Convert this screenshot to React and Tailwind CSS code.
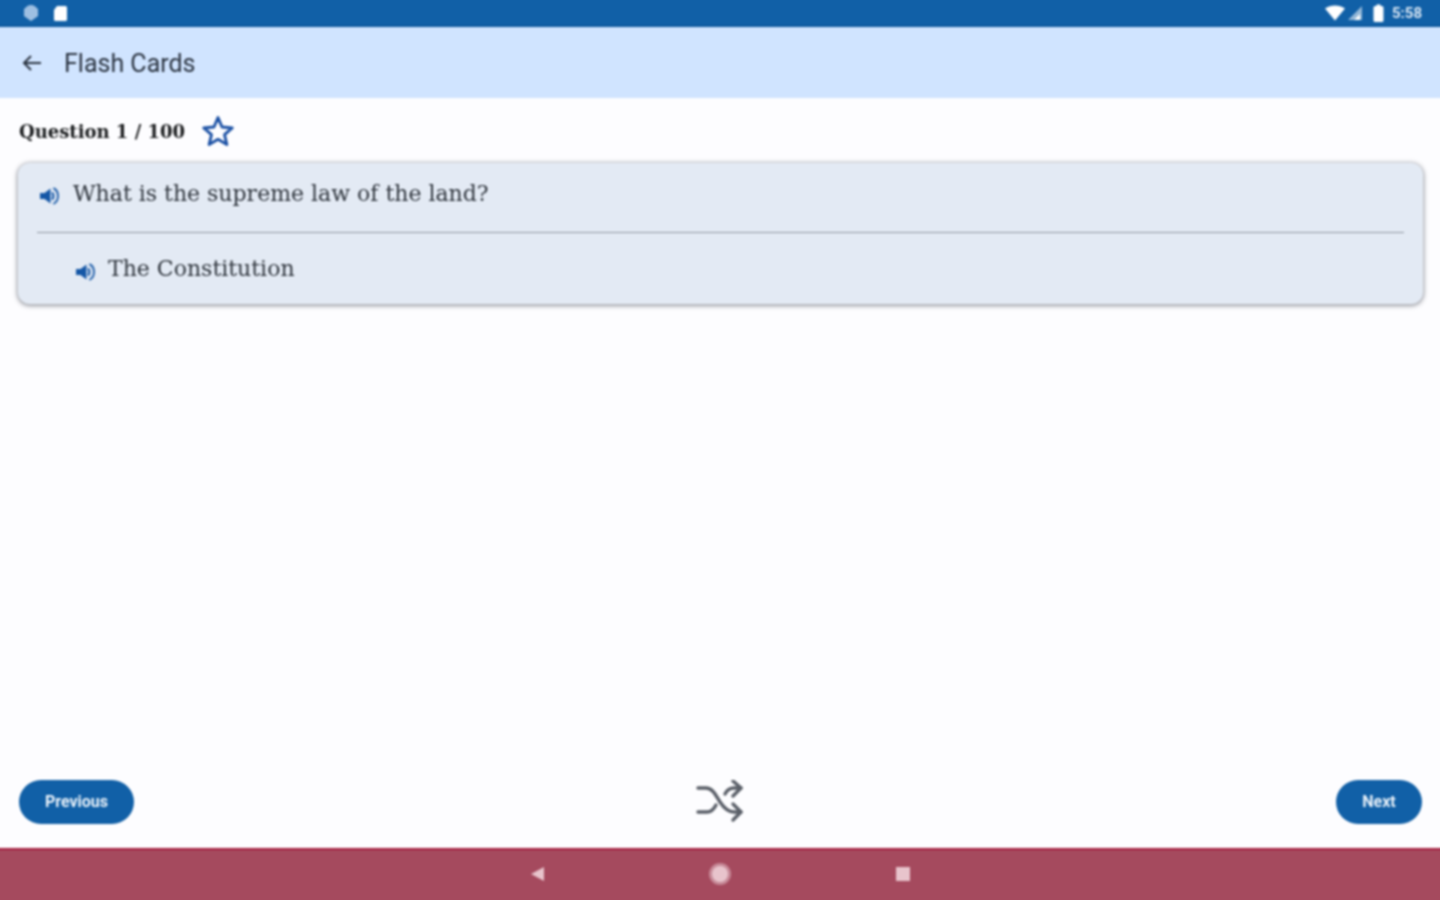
function Speaker({ className }) {
  return (
    <svg viewBox="0 0 22 22" className={className}>
      <path d="M1 8h4.500L11.500 3.500v15L5.500 14H1z" fill="#1557a6" />
      <path d="M13.500 8c1.200 2 1.200 4 0 6" fill="none" stroke="#1557a6" strokeWidth="2" strokeLinecap="round" />
      <path d="M15 3.500c4.800 2.500 5.800 11.500 0 15" fill="none" stroke="#2a66ad" strokeWidth="2" strokeLinecap="round" />
    </svg>
  );
}

export default function App() {
  return (
    <div className="h-[900px] w-[1440px] overflow-hidden">
      <div className="-ml-[4px] -mt-[4px] flex h-[908px] w-[1448px] flex-col bg-[#fdfdff] font-['Roboto',sans-serif] blur-[0.8px]">
        {/* status bar */}
        <div className="flex h-[31px] items-center justify-between border-b-2 border-[#0f5a9e] bg-[#1160a7] pl-[26px] pr-[22px] pt-[5px]">
          <div className="flex items-center gap-[12px]">
            <svg viewBox="0 0 18 18" className="h-[18px] w-[18px]">
              <path d="M9 1l7 4v7l-7 5-7-5V5z" fill="#a9c7e6" />
              <circle cx="9" cy="8" r="7" fill="#9dbfe2" />
            </svg>
            <svg viewBox="0 0 16 18" className="h-[18px] w-[16px]">
              <path d="M5 2h8.500a1.500 1.500 0 0 1 1.500 1.500v12a1.500 1.500 0 0 1-1.500 1.500h-10a1.500 1.500 0 0 1-1.500-1.500V6z" fill="#fff" />
            </svg>
          </div>
          <div className="flex items-center">
            <svg viewBox="0 0 20 16" className="h-[16px] w-[20px]">
              <path d="M0 3.500C5.500-.5 14.500-.5 20 3.500L10 15.500z" fill="#fff" />
            </svg>
            <svg viewBox="0 0 16 16" className="ml-[2px] h-[16px] w-[16px]">
              <path d="M1 15L15 1v14z" fill="#fff" fillOpacity="0.55" />
              <path d="M7 15l6-6v6z" fill="#fff" />
            </svg>
            <svg viewBox="0 0 10 18" className="ml-[10px] h-[18px] w-[11px]">
              <path d="M3 2V0.500h4V2h1.500A1.500 1.500 0 0 1 10 3.500V16.500A1.500 1.500 0 0 1 8.500 18h-7A1.500 1.500 0 0 1 0 16.500V3.500A1.500 1.500 0 0 1 1.500 2z" fill="#fff" />
            </svg>
            <span className="ml-[8px] text-[15px] font-bold leading-none text-[#dbe8f5]">5:58</span>
          </div>
        </div>

        {/* app bar */}
        <div className="flex h-[71px] items-center bg-[#d0e4ff] pl-[24px]">
          <svg viewBox="0 0 24 24" className="h-[24px] w-[24px]" fill="none" stroke="#2a3340" strokeWidth="2">
            <path d="M21 12H4M11 5l-7 7 7 7" />
          </svg>
          <span className="ml-[20px] pt-[2px] text-[25px] leading-none text-[#2a3340]">Flash Cards</span>
        </div>

        {/* main */}
        <div className="flex flex-1 flex-col px-[22px]">
          <div className="flex h-[65px] items-center pl-[1px] pt-[2px]">
            <span className="font-['DejaVu_Serif',serif] text-[18px] font-bold leading-none text-[#1a1c1e]">Question 1 / 100</span>
            <svg viewBox="0 0 34 34" className="-mt-[2px] ml-[16px] h-[34px] w-[34px]" fill="none" stroke="#1a50a4" strokeWidth="2.800" strokeLinejoin="round">
              <path d="M17 3.500l4 9.500 10.300.9-7.800 6.700 2.400 10-8.900-5.300-8.900 5.300 2.400-10-7.800-6.700L13 13z" />
            </svg>
          </div>

          <div className="flex h-[141px] w-[1405px] flex-col rounded-[12px] bg-[#e3eaf4] px-[19px] shadow-[0_1px_4px_1px_rgba(90,95,105,0.6)]">
            <div className="flex h-[70px] items-start border-b border-[#8f97a1] pt-[18px]">
              <Speaker className="ml-[2px] mt-[4px] h-[22px] w-[22px]" />
              <span className="ml-[12px] font-['DejaVu_Serif',serif] text-[22px] leading-[26px] text-[#2f353d]">What is the supreme law of the land?</span>
            </div>
            <div className="flex items-start pl-[38px] pt-[23px]">
              <Speaker className="mt-[5px] h-[22px] w-[22px]" />
              <span className="ml-[11px] font-['DejaVu_Serif',serif] text-[22px] leading-[26px] text-[#2f353d]">The Constitution</span>
            </div>
          </div>

          <div className="mb-[24px] mt-auto grid grid-cols-3 items-center">
            <button className="ml-[1px] flex h-[44px] w-[115px] items-center justify-center rounded-full bg-[#1160a7] text-[16px] font-bold text-[#eaf2fa]">Previous</button>
            <svg viewBox="0 0 48 44" className="h-[44px] w-[48px] justify-self-center" fill="none" stroke="#5a5f68" strokeWidth="3.400" strokeLinecap="round" strokeLinejoin="round">
              <path d="M2 8h8c7 0 10 8 14 14 4 6 8 10 14 10h7" />
              <path d="M2 32h9c4 0 7-3 9-7" />
              <path d="M29 14c2-4 5-6 9-6h7" />
              <path d="M37 1l8 7-8 8" />
              <path d="M37 24l8 8-8 8" />
            </svg>
            <button className="flex h-[44px] w-[86px] items-center justify-center justify-self-end rounded-full bg-[#1160a7] text-[16px] font-bold text-[#eaf2fa]">Next</button>
          </div>
        </div>

        {/* nav bar */}
        <div className="flex h-[56px] items-center justify-center gap-[164px] border-t-2 border-[#a61e40] bg-[#a54a5e] pb-[7px]">
          <svg viewBox="0 0 14 16" className="h-[16px] w-[14px]"><path d="M14 1v14L1 8z" fill="#e8c4cc" /></svg>
          <svg viewBox="0 0 24 24" className="h-[24px] w-[24px]">
            <circle cx="12" cy="12" r="11" fill="#c78a98" />
            <circle cx="12" cy="12" r="8" fill="#e8c4cc" />
          </svg>
          <div className="h-[14px] w-[14px] bg-[#e8c4cc]" />
        </div>
      </div>
    </div>
  );
}
